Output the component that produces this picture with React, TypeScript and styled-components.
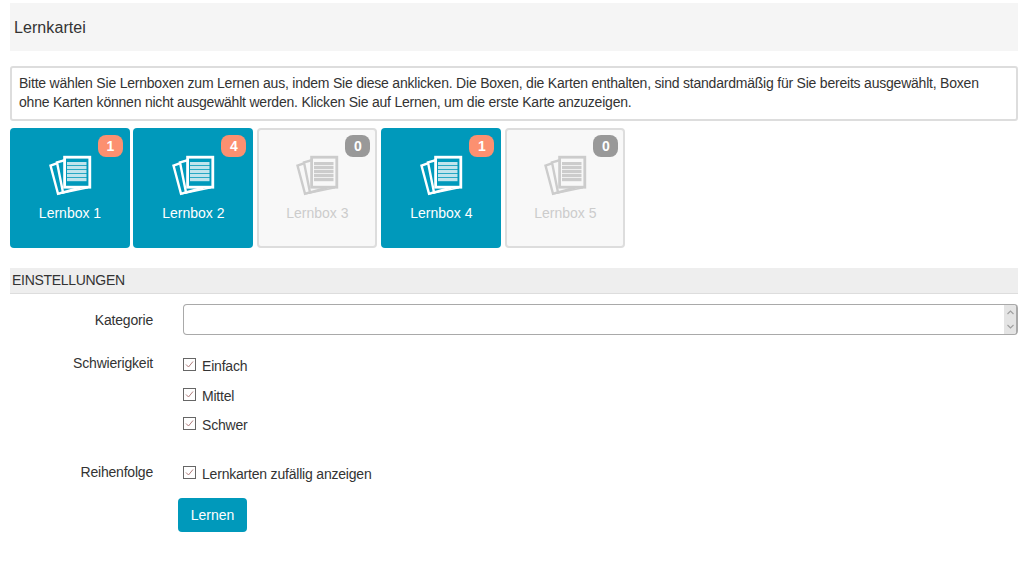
import React from "react";
import styled, { createGlobalStyle } from "styled-components";

const Global = createGlobalStyle`
  html, body { margin: 0; padding: 0; background: #fff; }
  body { font-family: "Liberation Sans", Arial, sans-serif; font-size: 14px; color: #333; }
`;

const Page = styled.div`
  padding: 3px 9px 0 10px;
  display: flex;
  flex-direction: column;
`;

const Header = styled.div`
  height: 48px;
  box-sizing: border-box;
  background: #f5f5f5;
  display: flex;
  align-items: center;
  padding: 1px 0 0 4px;
  font-size: 16px;
  letter-spacing: 0.08px;
  margin-bottom: 15px;
`;

const Info = styled.div`
  border: 2px solid #ddd;
  border-radius: 3px;
  padding: 6px 7px 8px;
  line-height: 19px;
  height: 55px;
  box-sizing: border-box;
  letter-spacing: -0.215px;
  margin-bottom: 7px;
`;

const BoxRow = styled.div`
  display: flex;
  gap: 4px;
  margin-bottom: 20px;
`;

const Box = styled.div<{ $off?: boolean }>`
  position: relative;
  box-sizing: border-box;
  width: 120px;
  height: 120px;
  border-radius: 4px;
  padding-top: ${(p) => (p.$off ? 25 : 27)}px;
  display: flex;
  flex-direction: column;
  align-items: center;
  background: ${(p) => (p.$off ? "#f8f8f8" : "#0099bb")};
  border: ${(p) => (p.$off ? "2px solid #ddd" : "none")};
  color: ${(p) => (p.$off ? "#ccc" : "#fff")};
  &:first-child {
    margin-right: -0.6px;
  }
`;

const BoxLabel = styled.div`
  margin-top: 7px;
  line-height: 20px;
`;

const Badge = styled.span<{ $off?: boolean }>`
  position: absolute;
  top: ${(p) => (p.$off ? 5 : 7)}px;
  right: ${(p) => (p.$off ? 5 : 7)}px;
  width: 25px;
  height: 22px;
  border-radius: 8px;
  display: flex;
  align-items: center;
  justify-content: center;
  font-weight: bold;
  color: #fff;
  background: ${(p) => (p.$off ? "#999" : "#fc9070")};
`;

const SectionTitle = styled.div`
  height: 26px;
  box-sizing: border-box;
  background: #eee;
  border-bottom: 1px solid #ddd;
  padding-left: 2px;
  line-height: 25px;
  letter-spacing: -0.3px;
  margin-bottom: 10px;
`;

const Form = styled.div`
  display: grid;
  grid-template-columns: 143px 1fr;
  column-gap: 30px;
  letter-spacing: -0.2px;
`;

const Label = styled.div<{ $top: number }>`
  text-align: right;
  line-height: 20px;
  padding-top: ${(p) => p.$top}px;
`;

const Field = styled.div`
  height: 31px;
  box-sizing: border-box;
  border: 1px solid #a9a9a9;
  border-right-width: 2px;
  border-radius: 4px;
  display: flex;
  justify-content: flex-end;
  overflow: hidden;
  margin-bottom: 18px;
`;

const Scrollbar = styled.div`
  width: 12px;
  background: #e4e4e4;
  display: flex;
  flex-direction: column;
  justify-content: space-between;
  align-items: center;
  padding: 5px 0;
  color: #a0a0a0;
`;

const Checks = styled.div<{ $bottom: number; $top: number }>`
  display: flex;
  flex-direction: column;
  gap: 9.5px;
  padding-top: ${(p) => p.$top}px;
  margin-bottom: ${(p) => p.$bottom}px;
`;

const CheckRow = styled.div`
  display: flex;
  align-items: center;
  gap: 6px;
  height: 20px;
  line-height: 20px;
`;

const CheckMark = styled.span`
  width: 13px;
  height: 13px;
  box-sizing: border-box;
  border: 1px solid #666;
  display: flex;
  align-items: center;
  justify-content: center;
  margin-top: -3px;
`;

const LearnButton = styled.button`
  grid-column: 2;
  justify-self: start;
  margin: 4px 0 0 -5px;
  width: 69px;
  height: 34px;
  border: none;
  border-radius: 4px;
  background: #0099bb;
  color: #fff;
  font: 14px "Liberation Sans", Arial, sans-serif;
  padding: 0;
`;

const CardsIcon = ({ off }: { off?: boolean }) => {
  const line = off ? "#ccc" : "#fff";
  const bg = off ? "#f8f8f8" : "#0099bb";
  const stripe = off ? "#ccc" : "#c0e4ec";
  return (
    <svg width="43" height="41" viewBox="0 0 43 41">
      <polygon points="1.5,10.6 14,6 24,34 9,38.8" fill={bg} stroke={line} strokeWidth="2.4" />
      <polygon points="8,7.4 20,4 30,33 14,37.5" fill={bg} stroke={line} strokeWidth="2.4" />
      <polygon points="8,40 14,37 39,32 39,33.4" fill={line} />
      <rect x="15.6" y="2.2" width="25.2" height="30" fill={bg} stroke={line} strokeWidth="2.8" />
      {[7, 11, 15, 19, 23].map((y) => (
        <rect key={y} x="18" y={y} width="19.5" height="3.2" fill={stripe} />
      ))}
    </svg>
  );
};

const Tick = () => (
  <svg width="9" height="9" viewBox="0 0 9 9">
    <path d="M1 4.5 L3.5 7 L8 1.5" fill="none" stroke="#b07c7c" strokeWidth="1" />
  </svg>
);

const Chevron = ({ up }: { up?: boolean }) => (
  <svg width="7" height="5" viewBox="0 0 7 5">
    <path d={up ? "M0.5 4 L3.5 1 L6.5 4" : "M0.5 1 L3.5 4 L6.5 1"} fill="none" stroke="currentColor" strokeWidth="1.2" />
  </svg>
);

const boxes = [
  { name: "Lernbox 1", count: 1 },
  { name: "Lernbox 2", count: 4 },
  { name: "Lernbox 3", count: 0 },
  { name: "Lernbox 4", count: 1 },
  { name: "Lernbox 5", count: 0 },
];

const Check = ({ children }: { children: React.ReactNode }) => (
  <CheckRow>
    <CheckMark>
      <Tick />
    </CheckMark>
    {children}
  </CheckRow>
);

export default function App() {
  return (
    <Page>
      <Global />
      <Header>Lernkartei</Header>
      <Info>
        Bitte wählen Sie Lernboxen zum Lernen aus, indem Sie diese anklicken. Die Boxen, die Karten enthalten, sind standardmäßig für Sie bereits ausgewählt, Boxen ohne Karten können nicht ausgewählt werden. Klicken Sie auf Lernen, um die erste Karte anzuzeigen.
      </Info>
      <BoxRow>
        {boxes.map((b) => (
          <Box key={b.name} $off={b.count === 0}>
            <Badge $off={b.count === 0}>{b.count}</Badge>
            <CardsIcon off={b.count === 0} />
            <BoxLabel>{b.name}</BoxLabel>
          </Box>
        ))}
      </BoxRow>
      <SectionTitle>EINSTELLUNGEN</SectionTitle>
      <Form>
        <Label $top={6}>Kategorie</Label>
        <Field>
          <Scrollbar>
            <Chevron up />
            <Chevron />
          </Scrollbar>
        </Field>
        <Label $top={0}>Schwierigkeit</Label>
        <Checks $top={3} $bottom={27}>
          <Check>Einfach</Check>
          <Check>Mittel</Check>
          <Check>Schwer</Check>
        </Checks>
        <Label $top={0}>Reihenfolge</Label>
        <Checks $top={2} $bottom={10}>
          <Check>Lernkarten zufällig anzeigen</Check>
        </Checks>
        <LearnButton>Lernen</LearnButton>
      </Form>
    </Page>
  );
}
